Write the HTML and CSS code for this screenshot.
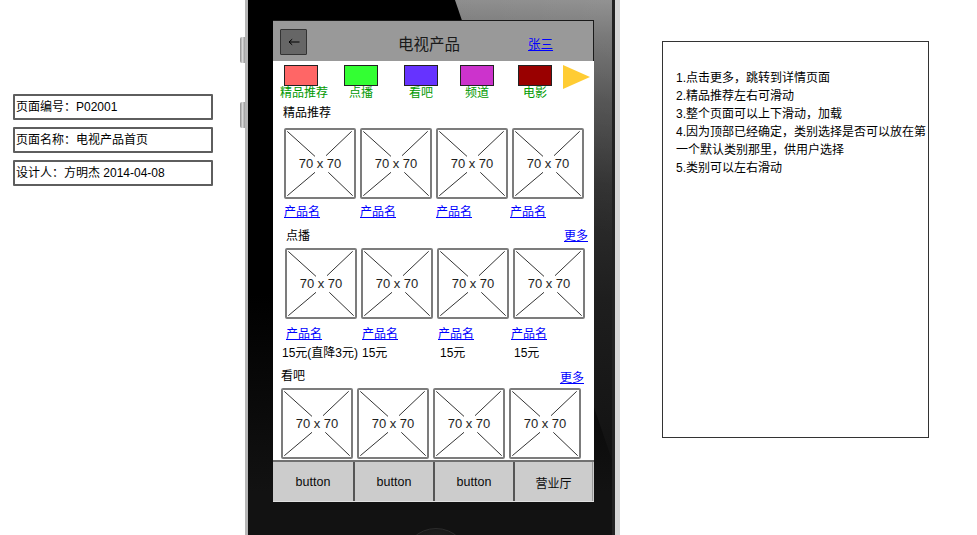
FILE: index.html
```html
<!DOCTYPE html>
<html lang="zh-CN">
<head>
<meta charset="utf-8">
<title>电视产品首页</title>
<link rel="stylesheet" href="styles.css">
</head>
<body>
<div class="meta">
  <div class="meta-row">页面编号：P02001</div>
  <div class="meta-row">页面名称：电视产品首页</div>
  <div class="meta-row">设计人：方明杰 2014-04-08</div>
</div>

<div class="phone">
  <span class="side-btn side-btn-1"></span>
  <span class="side-btn side-btn-2"></span>
  <div class="screen">
    <div class="topbar">
      <div class="back-btn">
        <svg width="12" height="8" viewBox="0 0 12 8"><path d="M1 4H11.5M1 4L4.2 1.2M1 4L4.2 6.8" stroke="#000" stroke-width="1" fill="none"/></svg>
      </div>
      <div class="title">电视产品</div>
      <a class="user" href="#">张三</a>
    </div>
    <div class="content">
      <div class="cats">
        <div class="cat cat-1"><span class="swatch sw-red"></span><span class="cat-label">精品推荐</span></div>
        <div class="cat"><span class="swatch sw-green"></span><span class="cat-label">点播</span></div>
        <div class="cat"><span class="swatch sw-blue"></span><span class="cat-label">看吧</span></div>
        <div class="cat cat-4"><span class="swatch sw-purple"></span><span class="cat-label">频道</span></div>
        <div class="cat cat-5"><span class="swatch sw-maroon"></span><span class="cat-label">电影</span></div>
        <svg class="cat-next" width="27" height="24" viewBox="0 0 27 24"><polygon points="0,0 27,12 0,24" fill="#ffcc33"/></svg>
      </div>

      <div class="sec-head sec-head-1"><span>精品推荐</span></div>
      <div class="grid grid-1">
        <div class="prod"><div class="card"><svg class="cross" viewBox="0 0 68 67"><path d="M1.3 1.4L29 26.4M42.3 42.3L66.7 65.7M65.7 1.3L40 25.7M29 42.3L1.3 65.7" stroke="#333" stroke-width="1" fill="none"/></svg><span class="dim">70 x 70</span></div><a class="pname pname-1" href="#">产品名</a></div>
        <div class="prod"><div class="card"><svg class="cross" viewBox="0 0 68 67"><path d="M1.3 1.4L29 26.4M42.3 42.3L66.7 65.7M65.7 1.3L40 25.7M29 42.3L1.3 65.7" stroke="#333" stroke-width="1" fill="none"/></svg><span class="dim">70 x 70</span></div><a class="pname pname-1" href="#">产品名</a></div>
        <div class="prod"><div class="card"><svg class="cross" viewBox="0 0 68 67"><path d="M1.3 1.4L29 26.4M42.3 42.3L66.7 65.7M65.7 1.3L40 25.7M29 42.3L1.3 65.7" stroke="#333" stroke-width="1" fill="none"/></svg><span class="dim">70 x 70</span></div><a class="pname pname-1" href="#">产品名</a></div>
        <div class="prod"><div class="card"><svg class="cross" viewBox="0 0 68 67"><path d="M1.3 1.4L29 26.4M42.3 42.3L66.7 65.7M65.7 1.3L40 25.7M29 42.3L1.3 65.7" stroke="#333" stroke-width="1" fill="none"/></svg><span class="dim">70 x 70</span></div><a class="pname pname-1 shift-l" href="#">产品名</a></div>
      </div>

      <div class="sec-head sec-head-2"><span>点播</span><a class="more" href="#">更多</a></div>
      <div class="grid grid-2">
        <div class="prod"><div class="card"><svg class="cross" viewBox="0 0 68 67"><path d="M1.3 1.4L29 26.4M42.3 42.3L66.7 65.7M65.7 1.3L40 25.7M29 42.3L1.3 65.7" stroke="#333" stroke-width="1" fill="none"/></svg><span class="dim">70 x 70</span></div><a class="pname pname-2" href="#">产品名</a><span class="price price-wide">15元(直降3元)</span></div>
        <div class="prod"><div class="card"><svg class="cross" viewBox="0 0 68 67"><path d="M1.3 1.4L29 26.4M42.3 42.3L66.7 65.7M65.7 1.3L40 25.7M29 42.3L1.3 65.7" stroke="#333" stroke-width="1" fill="none"/></svg><span class="dim">70 x 70</span></div><a class="pname pname-2" href="#">产品名</a><span class="price">15元</span></div>
        <div class="prod"><div class="card"><svg class="cross" viewBox="0 0 68 67"><path d="M1.3 1.4L29 26.4M42.3 42.3L66.7 65.7M65.7 1.3L40 25.7M29 42.3L1.3 65.7" stroke="#333" stroke-width="1" fill="none"/></svg><span class="dim">70 x 70</span></div><a class="pname pname-2" href="#">产品名</a><span class="price price-r">15元</span></div>
        <div class="prod"><div class="card"><svg class="cross" viewBox="0 0 68 67"><path d="M1.3 1.4L29 26.4M42.3 42.3L66.7 65.7M65.7 1.3L40 25.7M29 42.3L1.3 65.7" stroke="#333" stroke-width="1" fill="none"/></svg><span class="dim">70 x 70</span></div><a class="pname pname-2 shift-l" href="#">产品名</a><span class="price">15元</span></div>
      </div>

      <div class="sec-head sec-head-3"><span>看吧</span><a class="more more-low" href="#">更多</a></div>
      <div class="grid grid-3">
        <div class="prod"><div class="card"><svg class="cross" viewBox="0 0 68 67"><path d="M1.3 1.4L29 26.4M42.3 42.3L66.7 65.7M65.7 1.3L40 25.7M29 42.3L1.3 65.7" stroke="#333" stroke-width="1" fill="none"/></svg><span class="dim">70 x 70</span></div></div>
        <div class="prod"><div class="card"><svg class="cross" viewBox="0 0 68 67"><path d="M1.3 1.4L29 26.4M42.3 42.3L66.7 65.7M65.7 1.3L40 25.7M29 42.3L1.3 65.7" stroke="#333" stroke-width="1" fill="none"/></svg><span class="dim">70 x 70</span></div></div>
        <div class="prod"><div class="card"><svg class="cross" viewBox="0 0 68 67"><path d="M1.3 1.4L29 26.4M42.3 42.3L66.7 65.7M65.7 1.3L40 25.7M29 42.3L1.3 65.7" stroke="#333" stroke-width="1" fill="none"/></svg><span class="dim">70 x 70</span></div></div>
        <div class="prod"><div class="card"><svg class="cross" viewBox="0 0 68 67"><path d="M1.3 1.4L29 26.4M42.3 42.3L66.7 65.7M65.7 1.3L40 25.7M29 42.3L1.3 65.7" stroke="#333" stroke-width="1" fill="none"/></svg><span class="dim">70 x 70</span></div></div>
      </div>
    </div>
    <div class="tabbar">
      <div class="tab">button</div>
      <div class="tab">button</div>
      <div class="tab">button</div>
      <div class="tab">营业厅</div>
    </div>
  </div>
  <div class="home"></div>
</div>

<div class="notes">
  <div>1.点击更多，跳转到详情页面</div>
  <div>2.精品推荐左右可滑动</div>
  <div>3.整个页面可以上下滑动，加载</div>
  <div>4.因为顶部已经确定，类别选择是否可以放在第一个默认类别那里，供用户选择</div>
  <div>5.类别可以左右滑动</div>
</div>
</body>
</html>
```

FILE: styles.css
```css
html, body {
  margin: 0;
  padding: 0;
  width: 977px;
  height: 535px;
  overflow: hidden;
  background: #fff;
}
body {
  display: flex;
  align-items: flex-start;
  font-family: "Liberation Sans", "Noto Sans CJK SC", sans-serif;
  font-size: 12px;
  color: #000;
}

/* left meta boxes */
.meta {
  margin: 94px 0 0 13px;
  width: 200px;
  display: flex;
  flex-direction: column;
  gap: 7px;
}
.meta-row {
  box-sizing: border-box;
  height: 26px;
  border: 2px solid #5e5e5e;
  border-radius: 1px;
  padding-left: 1px;
  line-height: 22px;
  white-space: nowrap;
}

/* phone */
.phone {
  position: relative;
  margin-left: 32px;
  box-sizing: border-box;
  width: 375px;
  height: 535px;
  flex: none;
  border-left: 3px solid #b6b6b6;
  border-right: 5px solid #d6d6d6;
  padding: 20px 0 0 25px;
  background: linear-gradient(#000 0, #000 55%, #121212 92%);
  box-shadow: inset -3px 0 0 #222;
}
.phone::before {
  content: "";
  position: absolute;
  top: 0;
  left: 0;
  right: 3px;
  height: 460px;
  clip-path: polygon(207px 0, 100% 0, 100% 100%);
  background:
    linear-gradient(200deg, rgba(255,255,255,.12), rgba(255,255,255,0) 40%),
    linear-gradient(to bottom, #838383 0, #6a6a6a 8%, #4a4a4a 22%, #2f2f2f 40%, #1e1e1e 65%, #121212 100%);
}
.side-btn {
  position: absolute;
  left: -8px;
  width: 5px;
  height: 26px;
  border-radius: 2px 0 0 2px;
  background: linear-gradient(to right, #8a8a8a, #d8d8d8 50%, #9a9a9a);
}
.side-btn-1 { top: 37px; }
.side-btn-2 { top: 102px; }

.screen {
  position: relative;
  width: 321px;
  height: 482px;
  background: #fff;
  display: flex;
  flex-direction: column;
}
.topbar {
  box-sizing: border-box;
  height: 41px;
  flex: none;
  background: #999;
  border-top: 1px solid #1a1a1a;
  border-right: 1px solid #1a1a1a;
  display: flex;
  align-items: center;
  padding-top: 2px;
}
.back-btn {
  box-sizing: border-box;
  width: 27px;
  height: 26px;
  margin-left: 7px;
  background: #666;
  border: 1px solid #333;
  border-radius: 1px;
  display: flex;
  align-items: center;
  justify-content: center;
}
.title {
  margin-left: 91px;
  font-size: 15.5px;
  color: #1a1a1a;
  white-space: nowrap;
  padding-top: 2px;
}
.user {
  margin-left: 68px;
  font-size: 12.5px;
  color: #00f;
  padding-top: 3px;
}

.content {
  height: 399px;
  flex: none;
  overflow: hidden;
}
.cats {
  display: flex;
  align-items: flex-start;
  gap: 10px;
  padding-left: 3px;
  margin-top: 4px;
  height: 35px;
}
.cat {
  width: 50px;
  display: flex;
  flex-direction: column;
  align-items: center;
}
.cat-1 .cat-label { margin-left: 6px; }
.cat-4 { margin-left: -4px; }
.cat-5 { margin-left: -2px; }
.swatch {
  box-sizing: border-box;
  width: 34px;
  height: 21px;
  border: 1px solid #222;
}
.sw-red { background: #ff6666; }
.sw-green { background: #33ff33; }
.sw-blue { background: #6633ff; }
.sw-purple { background: #cc33cc; }
.sw-maroon { background: #990000; }
.cat-label {
  font-size: 12px;
  line-height: 14px;
  color: #009900;
  white-space: nowrap;
}
.cat-next {
  margin-left: -7px;
  display: block;
}

.sec-head {
  display: flex;
  justify-content: space-between;
  align-items: flex-start;
  line-height: 14px;
  height: 14px;
}
.sec-head-1 { margin-top: 6px; padding-left: 10px; }
.sec-head-2 { margin-top: 10px; padding: 0 6px 0 13px; }
.sec-head-3 { margin-top: 9px; padding: 0 10px 0 8px; }
.more { color: #00f; }
.more-low { margin-top: 2px; }

.grid {
  display: grid;
  grid-template-columns: repeat(4, 72px);
  column-gap: 4px;
}
.grid-1 { margin-top: 8px; padding-left: 11px; }
.grid-2 { margin-top: 5px; padding-left: 12px; }
.grid-3 { margin-top: 5px; padding-left: 8px; }

.prod {
  display: flex;
  flex-direction: column;
  align-items: flex-start;
}
.card {
  box-sizing: border-box;
  width: 72px;
  height: 71px;
  border: 2px solid #7c7c7c;
  border-radius: 2px;
  display: grid;
  place-items: center;
}
.cross {
  grid-area: 1 / 1;
  width: 68px;
  height: 67px;
  display: block;
}
.dim {
  grid-area: 1 / 1;
  font-size: 13px;
  color: #1e1e1e;
  white-space: nowrap;
}
.pname {
  color: #00f;
  line-height: 14px;
  white-space: nowrap;
}
.pname-1 { margin-top: 6px; }
.pname-2 { margin-top: 8px; margin-left: 1px; }
.shift-l { margin-left: -2px; }
.price {
  margin-top: 5px;
  line-height: 14px;
  white-space: nowrap;
  margin-left: 1px;
}
.price-wide { margin-left: -3px; }
.price-r { margin-left: 3px; }

.tabbar {
  box-sizing: border-box;
  height: 42px;
  flex: none;
  display: grid;
  grid-template-columns: repeat(4, 80px);
  background: #ccc;
  border-top: 2px solid #707070;
  border-bottom: 1px solid #e0e0e0;
}
.tab {
  display: flex;
  align-items: center;
  justify-content: center;
  font-size: 12.5px;
  color: #0a0a0a;
  border-left: 2px solid #555;
  padding-top: 1px;
}
.tab:first-child { border-left: none; }
.tab:last-child { border-right: 1px solid #999; font-size: 12px; }

.home {
  margin: 26px 0 0 130px;
  width: 64px;
  height: 64px;
  border-radius: 50%;
  background: radial-gradient(circle at 50% 30%, #262626, #0c0c0c 70%);
  border: 1px solid #2c2c2c;
}

/* notes */
.notes {
  margin: 41px 0 0 42px;
  box-sizing: border-box;
  width: 267px;
  height: 397px;
  flex: none;
  border: 1px solid #333;
  padding: 27px 0 0 13px;
  font-size: 12px;
  line-height: 18px;
  color: #000;
}
```
